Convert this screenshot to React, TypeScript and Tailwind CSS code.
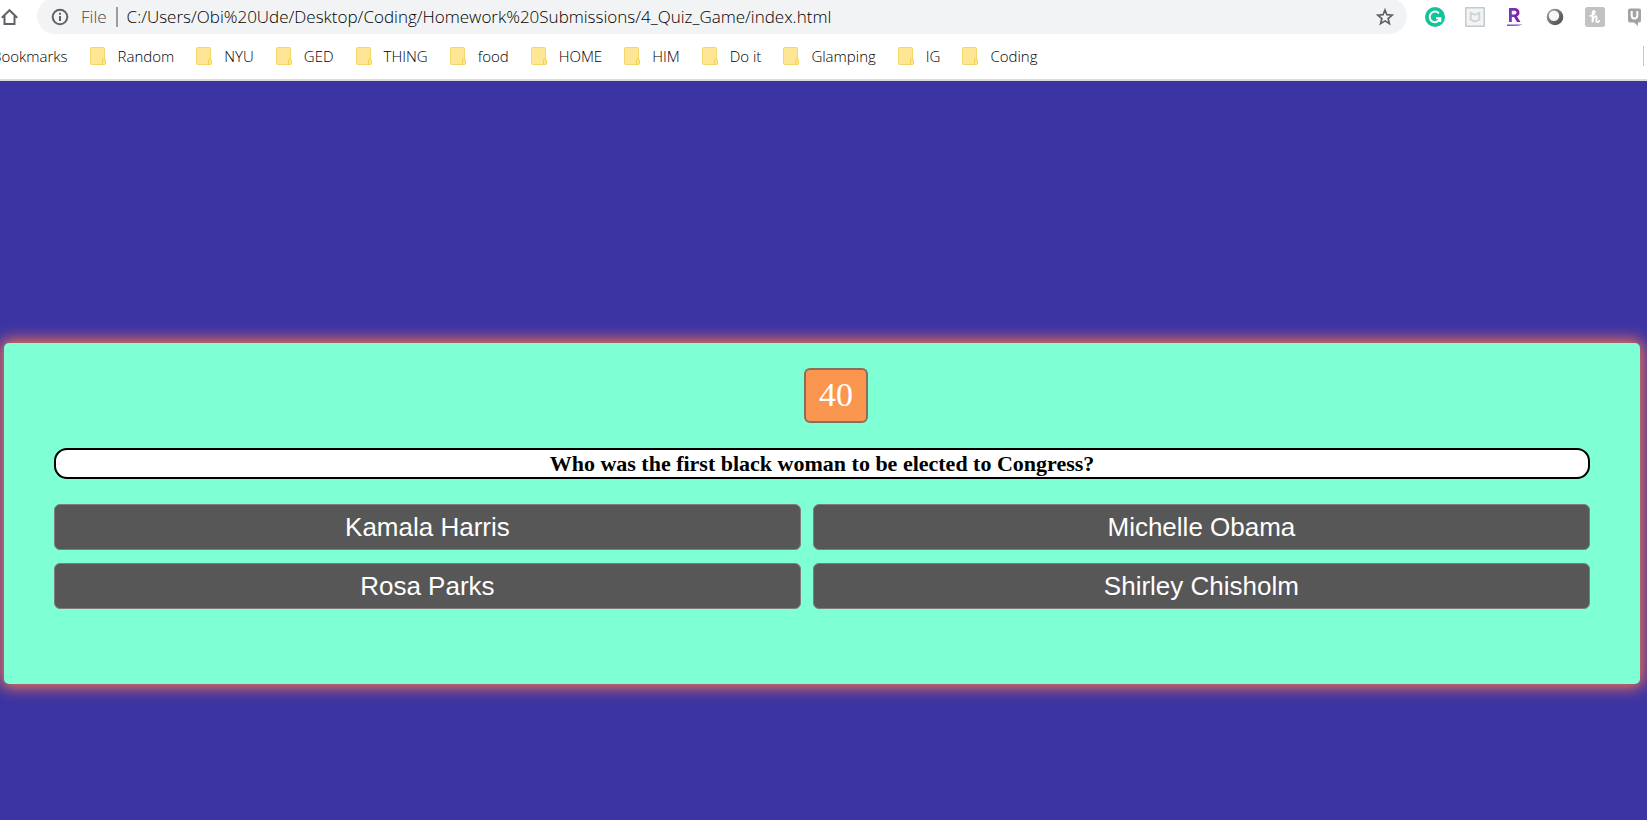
import React from "react";

const bookmarks = ["Random", "NYU", "GED", "THING", "food", "HOME", "HIM", "Do it", "Glamping", "IG", "Coding"];

const answers = ["Kamala Harris", "Michelle Obama", "Rosa Parks", "Shirley Chisholm"];

function FolderIcon() {
  return (
    <svg className="h-[18px] w-4 shrink-0" viewBox="0 0 16 18" aria-hidden="true">
      <rect x="0.5" y="0.5" width="14" height="17" rx="1" fill="#ffe694" stroke="#f5d668" />
      <rect x="12.5" y="12" width="3" height="5.5" rx="1.2" fill="#ffe694" stroke="#f5d03f" />
    </svg>
  );
}

function HomeIcon() {
  return (
    <svg className="h-[18px] w-[18px]" viewBox="0 0 18 18" fill="none" stroke="#5f6368" strokeWidth="2" aria-hidden="true">
      <path d="M1.8 9.8 9.5 2.2l7.7 7.6M4.5 8v8h10V8" />
    </svg>
  );
}

function InfoIcon() {
  return (
    <svg className="h-[18px] w-[18px] shrink-0" viewBox="0 0 18 18" aria-hidden="true">
      <circle cx="9" cy="9" r="7.3" fill="none" stroke="#5f6368" strokeWidth="2" />
      <path d="M8 8h2v5H8zM8 4.8h2v2H8z" fill="#5f6368" />
    </svg>
  );
}

function StarIcon() {
  return (
    <svg className="h-[18px] w-[18px]" viewBox="0 0 18 18" fill="none" stroke="#5f6368" strokeWidth="1.7" aria-hidden="true">
      <path d="m9 2 1.9 4.7 5.3.4-4.1 3.4 1.3 5.2L9 12.9l-4.4 2.8 1.3-5.2L1.8 7.1l5.3-.4z" />
    </svg>
  );
}

function GrammarIcon() {
  return (
    <svg className="h-5 w-5" viewBox="0 0 20 20" aria-hidden="true">
      <circle cx="10" cy="10" r="10" fill="#15c39a" />
      <path d="M13.9 6.3A5.3 5.3 0 1 0 15 11.5M11 11.3h4.3v3.7" fill="none" stroke="#fff" strokeWidth="2" />
    </svg>
  );
}

function ShieldIcon() {
  return (
    <svg className="h-5 w-5" viewBox="0 0 20 20" aria-hidden="true">
      <rect x="0.75" y="0.75" width="18.5" height="18.5" rx="0.5" fill="#f1f3f4" stroke="#c3cacd" strokeWidth="1.5" />
      <path d="M5.7 5.9 10 7.8l4.3-1.9v6.8L10 14.6l-4.3-1.9z" fill="none" stroke="#cdd2d4" strokeWidth="1.8" />
    </svg>
  );
}

function RewardsIcon() {
  return (
    <svg className="h-5 w-5" viewBox="0 0 20 20" aria-hidden="true">
      <defs>
        <linearGradient id="rewards" x1="0" x2="1">
          <stop offset="0" stopColor="#6a3fc0" />
          <stop offset="1" stopColor="#8a1a9c" />
        </linearGradient>
      </defs>
      <path
        d="M4 1h5.5c3 0 5 1.8 5 4.5 0 1.9-1 3.3-2.5 4l3.5 5.5H12l-3-5H6.8v5H4zM6.8 3.7v3.7h2.5c1.4 0 2.2-.7 2.2-1.9s-.8-1.8-2.2-1.8z"
        fill="url(#rewards)"
        fillRule="evenodd"
      />
      <path d="M2 17.5h15.500c-1.500.6-3 1-5 1.300L2 19z" fill="#7a4cc7" />
    </svg>
  );
}

function OrbIcon() {
  return (
    <svg className="h-5 w-5" viewBox="0 0 20 20" aria-hidden="true">
      <defs>
        <linearGradient id="orb" x1="0" y1="0" x2="1" y2="1">
          <stop offset="0" stopColor="#a8a8a8" />
          <stop offset="0.6" stopColor="#666" />
          <stop offset="1" stopColor="#4d4d4d" />
        </linearGradient>
      </defs>
      <circle cx="10" cy="10" r="8.3" fill="url(#orb)" />
      <circle cx="9" cy="8.8" r="5.2" fill="#f6f6f6" />
    </svg>
  );
}

function HoneyIcon() {
  return (
    <svg className="h-5 w-5" viewBox="0 0 20 20" aria-hidden="true">
      <rect width="20" height="20" rx="2.5" fill="#c2c2c2" />
      <path
        d="M5.2 8.8C8 8.5 10 6.5 9.7 4.8 9.3 3.2 7.6 4 7.5 6.5v9c.2-3.5 1.8-6.3 3.3-6.3 1.7 0 .4 3 .5 4.8.1 1.7 2.2 1.5 3-.3"
        fill="none"
        stroke="#fff"
        strokeWidth="1.8"
        strokeLinecap="round"
      />
    </svg>
  );
}

function ChatIcon() {
  return (
    <svg className="h-5 w-5" viewBox="0 0 20 20" aria-hidden="true">
      <path d="M5 1.5h9a2 2 0 0 1 2 2v10a2 2 0 0 1-2 2h-1V19l-4-3.500H5a2 2 0 0 1-2-2v-10a2 2 0 0 1 2-2z" fill="#a2a2a2" />
      <path d="M6.7 4v4.500c0 4 5.600 4 5.600 0V4" fill="none" stroke="#fff" strokeWidth="2" />
    </svg>
  );
}

const extensions = [
  { name: "Grammar", icon: <GrammarIcon /> },
  { name: "Shield", icon: <ShieldIcon /> },
  { name: "Rewards", icon: <RewardsIcon /> },
  { name: "Orb", icon: <OrbIcon /> },
  { name: "Coupons", icon: <HoneyIcon /> },
  { name: "Chat", icon: <ChatIcon /> },
];

function BrowserChrome() {
  return (
    <header className="overflow-hidden border-b-2 border-[#dadce0] bg-white font-['Open_Sans',sans-serif]">
      <div className="flex h-[34px] items-end pr-0.5">
        <button type="button" aria-label="Home" className="flex h-9 w-[37px] items-center pt-0.5">
          <HomeIcon />
        </button>
        <div className="flex h-9 min-w-0 flex-1 items-center rounded-full bg-[#f1f3f4] pl-[14px] pr-[13px] pt-0.5">
          <InfoIcon />
          <span className="ml-3 text-[17px] font-light leading-6 text-[#45484c]">File</span>
          <span className="mx-[9px] h-5 w-0.5 bg-[#9a9da0]" />
          <input
            aria-label="Address"
            className="min-w-0 flex-1 bg-transparent text-[17px] font-light leading-6 text-black outline-none"
            defaultValue="C:/Users/Obi%20Ude/Desktop/Coding/Homework%20Submissions/4_Quiz_Game/index.html"
          />
          <button type="button" aria-label="Bookmark this page">
            <StarIcon />
          </button>
        </div>
        <div className="flex h-9 items-center gap-5 pl-[18px] pt-0.5">
          {extensions.map((e) => (
            <button key={e.name} type="button" aria-label={e.name}>
              {e.icon}
            </button>
          ))}
        </div>
      </div>
      <nav className="flex h-[45px] items-center justify-between pb-px pr-[3px] text-[15px] font-light leading-5 text-black">
        <div className="flex items-center gap-[22px] whitespace-nowrap">
          <a href="#bookmarks" className="-ml-2">Bookmarks</a>
          {bookmarks.map((b) => (
            <a key={b} href={"#" + b} className="flex items-center gap-3">
              <FolderIcon />
              {b}
            </a>
          ))}
        </div>
        <span className="h-5 w-px bg-[#c4c7ca]" />
      </nav>
    </header>
  );
}

export default function App() {
  return (
    <div className="flex min-h-screen flex-col overflow-x-hidden bg-[#3d34a3]">
      <BrowserChrome />
      <main className="flex-1 pb-32 pl-1 pr-[7px] pt-[262px]">
        <section className="flex flex-col gap-[25px] rounded-[5px] bg-[#7fffd4] px-[50px] pb-[75px] pt-[25px] shadow-[0_0_15px_3px_#fa7850]">
          <div className="flex justify-center pl-7 font-['Liberation_Serif',serif]">
            <div className="flex h-[55px] w-16 items-center justify-center rounded-md border-2 border-[#8a6f5c] bg-[#fb9650] pb-0.5 text-[34px] leading-10 text-white">
              40
            </div>
          </div>
          <h1 className="rounded-[13px] border-2 border-black bg-white text-center font-['Liberation_Serif',serif] text-[22px] font-bold leading-[27px] text-black">
            Who was the first black woman to be elected to Congress?
          </h1>
          <div className="grid grid-cols-[auto_auto] gap-x-3 gap-y-[13px] font-['Liberation_Sans',sans-serif]">
            {answers.map((a) => (
              <button
                key={a}
                type="button"
                className="h-[46px] rounded-md border border-[#7d7d7d] bg-[#575757] text-[26px] leading-8 text-white"
              >
                {a}
              </button>
            ))}
          </div>
        </section>
      </main>
    </div>
  );
}
